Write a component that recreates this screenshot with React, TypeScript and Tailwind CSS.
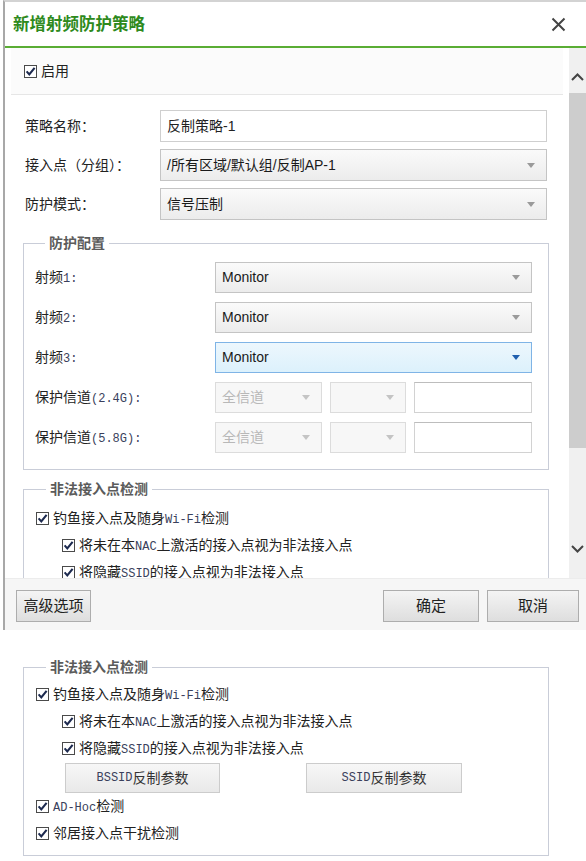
import React from "react";

const sans = "font-['Liberation_Sans','Noto_Sans_CJK_SC',sans-serif]";

function Check() {
  return (
    <svg width="13" height="13" viewBox="0 0 13 13" className="shrink-0">
      <rect x="0.5" y="0.5" width="12" height="12" fill="#fff" stroke="#4a4a4a" />
      <path d="M2.6 6.4 L5.3 9.4 L10.6 2.8" fill="none" stroke="#1d2a4f" strokeWidth="2.1" />
    </svg>
  );
}

function Mono({ children }: { children: React.ReactNode }) {
  return <span className="font-['Liberation_Mono',monospace] text-[12px] text-[#3a3f5c]">{children}</span>;
}

function Arrow({ color = "#9a9a9a" }: { color?: string }) {
  return (
    <svg width="8" height="5" viewBox="0 0 8 5" className="shrink-0">
      <path d="M0 0 H8 L4 5 Z" fill={color} />
    </svg>
  );
}

function Select({
  value,
  state = "normal",
  className = "",
}: {
  value?: string;
  state?: "normal" | "focus" | "disabled";
  className?: string;
}) {
  const skin =
    state === "focus"
      ? "border-[#7fb4e6] bg-linear-to-b from-[#edf7fd] to-[#dcf1fc] text-[#1a1a1a]"
      : state === "disabled"
        ? "border-[#dcdcdc] bg-[#f7f7f7] text-[#b8b8b8]"
        : "border-[#c4c4c4] bg-linear-to-b from-[#fafafa] to-[#ececec] text-[#1a1a1a]";
  return (
    <div className={`flex h-full items-center justify-between border pl-[6px] pr-[11px] text-[14px] ${skin} ${className}`}>
      <span>{value}</span>
      <Arrow color={state === "focus" ? "#1f5fae" : state === "disabled" ? "#c4c4c4" : "#9a9a9a"} />
    </div>
  );
}

function Legend({ children }: { children: React.ReactNode }) {
  return (
    <legend className="ml-[10px] px-[4px] text-[14px] leading-[20px] font-bold text-[#5b5b5b]">{children}</legend>
  );
}

function CheckRow({ indent = false, children }: { indent?: boolean; children: React.ReactNode }) {
  return (
    <div className={`flex h-[27px] items-center gap-[4px] text-[14px] ${indent ? "pl-[26px]" : ""}`}>
      <Check />
      <span>{children}</span>
    </div>
  );
}

function RogueRows() {
  return (
    <>
      <CheckRow>
        钓鱼接入点及随身<Mono>Wi-Fi</Mono>检测
      </CheckRow>
      <CheckRow indent>
        将未在本<Mono>NAC</Mono>上激活的接入点视为非法接入点
      </CheckRow>
      <CheckRow indent>
        将隐藏<Mono>SSID</Mono>的接入点视为非法接入点
      </CheckRow>
    </>
  );
}

function FormRow({ label, children, h = "h-[32px]" }: { label: string; children: React.ReactNode; h?: string }) {
  return (
    <div className={`flex ${h} items-center`}>
      <div className="w-[135px] shrink-0 text-[14px]">{label}</div>
      <div className="h-full flex-1">{children}</div>
    </div>
  );
}

function ConfigRow({ label, children }: { label: React.ReactNode; children: React.ReactNode }) {
  return (
    <div className="flex h-[31px] items-center">
      <div className="w-[180px] shrink-0 text-[14px]">{label}</div>
      <div className="flex h-full flex-1 gap-[8px]">{children}</div>
    </div>
  );
}

function GrayButton({ children, className = "" }: { children: React.ReactNode; className?: string }) {
  return (
    <button className={`flex items-center justify-center border border-[#adadad] bg-linear-to-b from-[#f4f4f4] to-[#dedede] text-[15px] text-[#222] ${className}`}>
      {children}
    </button>
  );
}

function Chevron({ up }: { up?: boolean }) {
  return (
    <svg width="13" height="8" viewBox="0 0 13 8" className="mx-auto">
      <path d={up ? "M1 7 L6.5 1.5 L12 7" : "M1 1 L6.5 6.5 L12 1"} fill="none" stroke="#444" strokeWidth="2" />
    </svg>
  );
}

export default function App() {
  return (
    <div className={`${sans} relative h-[861px] w-[586px] overflow-hidden bg-white text-[#222]`}>
      {/* dialog */}
      <div className="ml-[3px] flex h-[630px] flex-col border-t-2 border-l-2 border-t-[#d3d3d3] border-l-[#a8a8a8]">
        <div className="flex h-[46px] shrink-0 items-center justify-between border-b-2 border-[#5aad34] pl-[8px] pr-[20px]">
          <span className="text-[16.5px] font-bold text-[#2e8a1c]">新增射频防护策略</span>
          <svg width="15" height="15" viewBox="0 0 15 15">
            <path d="M1.5 1.5 L13.5 13.5 M13.5 1.5 L1.5 13.5" stroke="#444" strokeWidth="2" />
          </svg>
        </div>

        <div className="flex h-[530px] shrink-0">
          <div className="flex-1 overflow-hidden">
            <div className="mx-[6px] flex h-[47px] items-center gap-[4px] border-b border-[#e6e6e6] bg-[#fbfbfb] pl-[13px] text-[14px]">
              <Check />
              <span>启用</span>
            </div>

            <div className="mt-[15px] mr-[22px] ml-[20px] flex flex-col gap-[7px]">
              <FormRow label="策略名称：">
                <div className="flex h-full items-center border border-[#cfcfcf] bg-white pl-[6px] text-[14px]">反制策略-1</div>
              </FormRow>
              <FormRow label="接入点（分组）：">
                <Select value="/所有区域/默认组/反制AP-1" />
              </FormRow>
              <FormRow label="防护模式：">
                <Select value="信号压制" />
              </FormRow>
            </div>

            <fieldset className="mt-[13px] mr-[20px] ml-[18px] border border-[#c9cdd8] pt-[9px] pr-[16px] pb-[16px] pl-[11px]">
              <Legend>防护配置</Legend>
              <div className="flex flex-col gap-[9px]">
                <ConfigRow label={<>射频<Mono>1:</Mono></>}>
                  <Select value="Monitor" className="flex-1" />
                </ConfigRow>
                <ConfigRow label={<>射频<Mono>2:</Mono></>}>
                  <Select value="Monitor" className="flex-1" />
                </ConfigRow>
                <ConfigRow label={<>射频<Mono>3:</Mono></>}>
                  <Select value="Monitor" state="focus" className="flex-1" />
                </ConfigRow>
                <ConfigRow label={<>保护信道<Mono>(2.4G):</Mono></>}>
                  <Select value="全信道" state="disabled" className="w-[107px]" />
                  <Select state="disabled" className="w-[76px]" />
                  <div className="flex-1 border border-[#d2d2d2] border-t-[#bdbdbd] bg-white" />
                </ConfigRow>
                <ConfigRow label={<>保护信道<Mono>(5.8G):</Mono></>}>
                  <Select value="全信道" state="disabled" className="w-[107px]" />
                  <Select state="disabled" className="w-[76px]" />
                  <div className="flex-1 border border-[#d2d2d2] border-t-[#bdbdbd] bg-white" />
                </ConfigRow>
              </div>
            </fieldset>

            <fieldset className="mt-[9px] mr-[20px] ml-[18px] border border-[#c9cdd8] pt-[6px] pl-[12px]">
              <Legend>非法接入点检测</Legend>
              <RogueRows />
            </fieldset>
          </div>

          {/* scrollbar */}
          <div className="flex w-[17px] shrink-0 flex-col bg-[#f0f0f0]">
            <div className="h-[45px] pt-[25px]">
              <Chevron up />
            </div>
            <div className="h-[355px] bg-[#cdcdcd]" />
            <div className="flex-1" />
            <div className="pb-[25px]">
              <Chevron />
            </div>
          </div>
        </div>

        <div className="flex h-[52px] shrink-0 items-start border-t border-[#ececec] bg-[#f6f6f6] pt-[11px] pr-[7px] pl-[11px]">
          <GrayButton className="h-[32px] w-[75px]">高级选项</GrayButton>
          <div className="flex-1" />
          <div className="flex gap-[8px]">
            <GrayButton className="h-[32px] w-[96px]">确定</GrayButton>
            <GrayButton className="h-[32px] w-[92px]">取消</GrayButton>
          </div>
        </div>
      </div>

      {/* expanded section */}
      <fieldset className="mt-[27px] ml-[23px] w-[526px] border border-[#c9cdd8] pt-[4px] pb-[8px] pl-[12px]">
        <Legend>非法接入点检测</Legend>
        <RogueRows />
        <div className="mt-[1px] flex gap-[86px] pl-[29px]">
          <button className="flex h-[30px] w-[155px] items-center justify-center border border-[#cccccc] bg-linear-to-b from-[#f7f7f7] to-[#e9e9e9] text-[14px] text-[#333]">
            <Mono>BSSID</Mono>反制参数
          </button>
          <button className="flex h-[30px] w-[156px] items-center justify-center border border-[#cccccc] bg-linear-to-b from-[#f7f7f7] to-[#e9e9e9] text-[14px] text-[#333]">
            <Mono>SSID</Mono>反制参数
          </button>
        </div>
        <CheckRow>
          <Mono>AD-Hoc</Mono>检测
        </CheckRow>
        <CheckRow>邻居接入点干扰检测</CheckRow>
      </fieldset>
    </div>
  );
}
